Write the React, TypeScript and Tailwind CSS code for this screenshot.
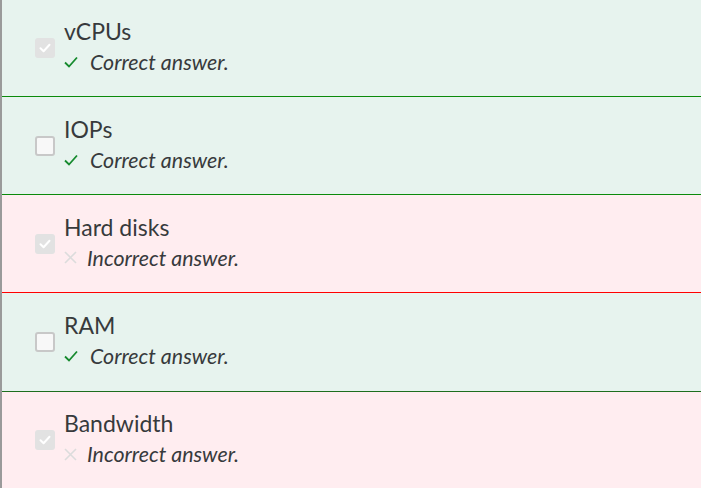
const rows = [
  { label: "vCPUs", checked: true, correct: true, border: "border-[#0b8a0b]", h: "h-[97px]" },
  { label: "IOPs", checked: false, correct: true, border: "border-[#0b8a0b]", h: "h-[98px]" },
  { label: "Hard disks", checked: true, correct: false, border: "border-[#ff0000]", h: "h-[98px]" },
  { label: "RAM", checked: false, correct: true, border: "border-[#1e6e1e]", h: "h-[99px]" },
  { label: "Bandwidth", checked: true, correct: false, border: "border-transparent", h: "h-[97px]" },
];

function Box({ checked }: { checked: boolean }) {
  if (checked) {
    return (
      <div className="flex h-5 w-5 shrink-0 items-center justify-center rounded-[3px] bg-[#e2e2e2]">
        <svg width="14" height="14" viewBox="0 0 14 14" fill="none">
          <path d="M2.5 7.2 L5.6 10.2 L11.5 3.8" stroke="white" strokeWidth="2" strokeLinecap="round" strokeLinejoin="round" />
        </svg>
      </div>
    );
  }
  return <div className="h-5 w-5 shrink-0 rounded-[3px] border-2 border-[#c8c8c8] bg-[#f8f8f8]" />;
}

export default function App() {
  return (
    <div className="h-[488px] w-[701px] overflow-hidden border-l-2 border-[#9a9a9a] bg-white font-['Lato',sans-serif] text-[#373a3c]">
      {rows.map((r) => (
        <div
          key={r.label}
          className={`flex ${r.h} items-center gap-[9px] border-b pl-[33px] ${r.border} ${r.correct ? "bg-[#e7f3ee]" : "bg-[#ffedf0]"}`}
        >
          <Box checked={r.checked} />
          <div className="flex flex-col pb-[2px]">
            <span className="mb-[4px] text-[23px] leading-[26px]">{r.label}</span>
            <span className="flex items-center text-[21.4px] italic leading-[28px]">
              {r.correct ? (
                <svg width="14" height="12" viewBox="0 0 14 12" fill="none" className="mr-[12px]">
                  <path d="M1 6.5 L5 10.5 L13 1.5" stroke="#168a2e" strokeWidth="1.8" />
                </svg>
              ) : (
                <svg width="13" height="13" viewBox="0 0 13 13" fill="none" className="mr-[10px]">
                  <path d="M1 1 L12 12 M12 1 L1 12" stroke="#dcdcdc" strokeWidth="1.6" />
                </svg>
              )}
              <span>{r.correct ? "Correct answer." : "Incorrect answer."}</span>
            </span>
          </div>
        </div>
      ))}
    </div>
  );
}
